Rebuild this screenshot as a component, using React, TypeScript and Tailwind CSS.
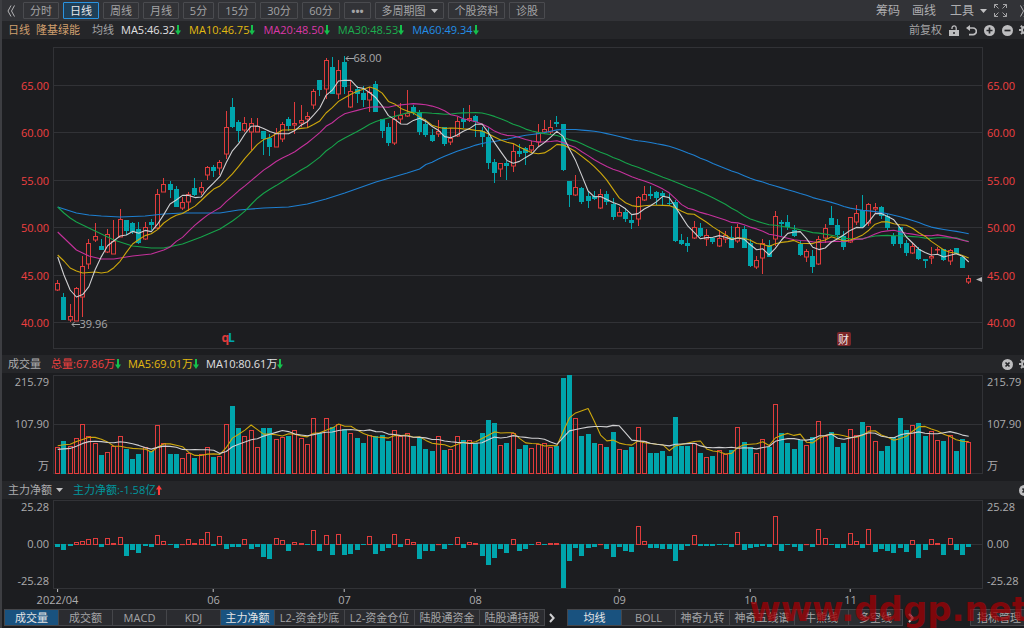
import type { ReactNode } from 'react';
import clsx from 'clsx';

// [high, body top, body bottom, low, up]
type Candle = [number, number, number, number, number];
type Point = [number, number];

const PLOT_W = 930;
const STEP = 6.24;
const RED = '#e03c3c';
const TEAL = '#00a5ac';
const GRID = '#313236';

const candles: Candle[] = [
  [240, 243, 250, 251, 1], [253, 257, 280, 280, 0], [264, 276, 280, 282, 1], [247, 248, 281, 281, 1],
  [216, 226, 257, 277, 1], [199, 203, 224, 229, 1], [183, 196, 200, 202, 1], [199, 206, 210, 210, 0],
  [189, 194, 212, 213, 1], [180, 201, 214, 214, 1], [169, 179, 197, 197, 1], [180, 180, 191, 195, 0],
  [182, 183, 192, 194, 0], [182, 189, 203, 204, 0], [182, 187, 199, 200, 1], [179, 182, 185, 190, 0],
  [149, 154, 188, 189, 1], [138, 144, 152, 152, 1], [141, 144, 150, 158, 0], [146, 149, 167, 167, 0],
  [157, 162, 168, 170, 1], [152, 154, 162, 171, 1], [138, 148, 155, 156, 0], [142, 147, 152, 155, 1],
  [126, 127, 135, 140, 1], [125, 127, 131, 137, 0], [120, 122, 128, 135, 1], [71, 87, 114, 119, 1],
  [58, 67, 87, 88, 0], [80, 82, 91, 102, 0], [77, 83, 90, 92, 1], [78, 83, 92, 110, 1],
  [78, 86, 92, 92, 1], [91, 91, 99, 115, 0], [94, 98, 107, 116, 0], [88, 93, 107, 107, 1],
  [82, 84, 99, 102, 1], [77, 79, 86, 91, 0], [62, 83, 85, 94, 1], [65, 80, 83, 87, 1],
  [72, 76, 79, 88, 1], [49, 51, 65, 69, 1], [40, 40, 50, 56, 0], [18, 20, 49, 59, 1],
  [17, 27, 54, 54, 0], [20, 30, 54, 59, 1], [16, 22, 47, 54, 0], [41, 51, 67, 68, 1],
  [46, 49, 54, 63, 0], [46, 53, 60, 67, 0], [47, 52, 60, 72, 1], [41, 44, 72, 72, 0],
  [79, 79, 91, 98, 0], [83, 87, 103, 106, 0], [71, 79, 103, 105, 1], [63, 75, 79, 83, 1],
  [50, 73, 76, 77, 1], [65, 67, 72, 75, 0], [70, 72, 92, 95, 0], [79, 84, 95, 97, 0],
  [89, 95, 101, 102, 0], [80, 91, 94, 97, 1], [87, 87, 104, 106, 0], [88, 98, 102, 105, 1],
  [77, 81, 96, 97, 1], [68, 79, 82, 88, 0], [65, 78, 80, 82, 1], [75, 76, 82, 97, 0],
  [87, 91, 97, 107, 0], [87, 97, 123, 129, 0], [119, 122, 133, 143, 0], [123, 123, 129, 137, 1],
  [121, 123, 126, 140, 0], [104, 111, 126, 132, 1], [104, 111, 114, 117, 0], [107, 108, 113, 125, 0],
  [101, 105, 110, 113, 1], [84, 92, 102, 106, 1], [80, 89, 92, 94, 1], [80, 87, 92, 94, 1],
  [76, 82, 84, 87, 0], [84, 84, 130, 131, 0], [141, 141, 155, 167, 0], [135, 147, 155, 156, 1],
  [147, 148, 162, 164, 0], [152, 156, 161, 168, 0], [151, 156, 159, 160, 0], [149, 154, 168, 169, 1],
  [151, 154, 162, 165, 0], [158, 164, 177, 180, 0], [167, 172, 176, 176, 1], [168, 172, 179, 182, 0],
  [175, 180, 183, 189, 0], [156, 157, 179, 186, 1], [146, 154, 160, 161, 1], [146, 154, 156, 159, 0],
  [151, 152, 158, 165, 0], [151, 153, 156, 165, 0], [153, 163, 164, 165, 0], [160, 162, 201, 202, 0],
  [194, 200, 204, 205, 0], [197, 203, 206, 212, 0], [181, 187, 198, 199, 1], [183, 188, 196, 197, 0],
  [189, 195, 199, 206, 1], [197, 198, 202, 204, 0], [190, 198, 206, 207, 1], [191, 195, 199, 203, 1],
  [186, 197, 208, 208, 0], [184, 187, 201, 203, 1], [186, 189, 208, 208, 0], [199, 203, 226, 227, 0],
  [216, 220, 227, 229, 1], [199, 203, 218, 234, 1], [200, 205, 217, 217, 0], [171, 176, 199, 206, 1],
  [180, 182, 184, 196, 0], [175, 182, 187, 190, 0], [185, 190, 196, 197, 0], [201, 204, 215, 216, 0],
  [209, 211, 217, 222, 1], [210, 216, 227, 233, 0], [196, 199, 224, 225, 1], [184, 188, 198, 203, 1],
  [166, 178, 185, 185, 0], [179, 185, 195, 199, 0], [191, 196, 207, 210, 0], [177, 177, 202, 203, 1],
  [165, 173, 182, 185, 1], [155, 170, 187, 188, 0], [163, 164, 183, 186, 1], [163, 167, 169, 173, 1],
  [166, 167, 176, 179, 0], [174, 176, 188, 190, 0], [193, 196, 204, 206, 0], [187, 187, 204, 208, 0],
  [200, 203, 213, 216, 0], [203, 206, 213, 214, 1], [207, 209, 219, 220, 0], [219, 219, 221, 228, 0],
  [207, 216, 218, 224, 1], [207, 209, 210, 214, 1], [209, 209, 220, 221, 0], [209, 210, 221, 225, 1],
  [208, 208, 214, 214, 0], [215, 217, 228, 228, 0], [235, 238, 242, 244, 1],
];

// in units of 10,000 lots
const volumes = [
  58, 71, 60, 77, 108, 83, 68, 40, 48, 61, 82, 54, 31, 43, 58, 50, 106, 68, 43, 43, 34, 44, 35, 42, 58,
  36, 39, 108, 148, 99, 82, 95, 58, 99, 99, 75, 81, 83, 95, 79, 64, 121, 89, 121, 103, 108, 97, 90, 78,
  66, 84, 83, 85, 71, 95, 82, 90, 60, 77, 54, 50, 82, 52, 53, 82, 74, 74, 66, 89, 117, 111, 62, 68, 90,
  54, 62, 55, 65, 66, 58, 61, 209, 216, 121, 82, 86, 68, 64, 58, 91, 53, 52, 58, 103, 71, 45, 45, 50, 39,
  124, 61, 61, 66, 45, 36, 39, 52, 42, 52, 101, 69, 58, 46, 75, 59, 152, 88, 66, 53, 74, 63, 80, 116, 83,
  91, 58, 66, 97, 85, 113, 104, 71, 50, 61, 80, 121, 96, 106, 111, 83, 93, 73, 71, 85, 49, 76, 70,
];

const flows = [
  -1.4, -3.3, -0.8, 1.7, 2.3, 3.3, 3.9, -1.7, 3.7, 0.7, 4.3, -6.6, -3.3, -4.8, -0.8, -1.4, 5.8, 1.9, -0.2,
  -2.3, 0.2, 3.3, 0.6, 3.3, 7, -0.8, 4.8, -2.7, -1.3, -1.7, 3.4, -2.7, -1.2, -7, -8.5, 3.7, 2.9, -3.9, 1.2,
  0.7, -0.2, 8.5, -3.9, 5.8, -6, 6.3, -6, -5.4, -3.3, -0.2, 5.2, -5.4, -3.9, -2.1, 6.3, -1.7, 3.3, 1.2,
  -8.5, -3.9, -3.9, 0.2, -2.7, -0.2, 4.2, -2.1, 1.7, 0.7, -6.6, -12.2, -8, -2.7, -4.8, 3.3, -3.9, -2.7,
  -0.2, 1.7, -0.2, 0.6, 0.6, -25.3, -9.5, -1.8, -6.8, -2.2, -1.2, 0.5, -2.8, -7.5, -1.2, -3.8, -4.3, 10.5,
  2.3, -2.3, -1.8, -2.7, -2.7, -9.5, -3.3, -0.8, 5.8, -0.8, -0.8, -0.8, -0.2, -0.2, -1.7, 7, -3.3, -1.9,
  -1.3, -1, -1.3, 16.3, -3.9, -0.2, -1.3, -3.9, 0.2, -1.3, 8.9, 3.7, -0.2, -1.9, -1.9, 6.4, 2.3, -2.3, 8.9,
  -4.3, -2.7, -3.9, -4.8, -2.1, -4.3, 2.7, -8, -3.3, 3.3, 0.7, -6, 3.7, -3.3, -6, -1.7,
];

const months = [
  { i: 0, label: '2022/04' },
  { i: 25, label: '06' },
  { i: 46, label: '07' },
  { i: 67, label: '08' },
  { i: 90, label: '09' },
  { i: 111, label: '10' },
  { i: 127, label: '11' },
];

const closes = candles.map(([, top, bottom, , up]) => (up ? top : bottom));

const barX = (i: number) => Math.floor(4.7 + i * STEP) + 0.5;
const percent = (i: number) => `${(barX(i) / PLOT_W) * 100}%`;

// moving average, with known points for the days before the window is full
function average(values: number[], n: number, lead: Point[]): Point[] {
  const rest = values.slice(n - 1).map((_, k): Point => {
    const span = values.slice(k, k + n);
    return [k + n - 1, span.reduce((a, b) => a + b, 0) / n];
  });
  return [...lead, ...rest];
}

const priceLines = [
  {
    color: '#1e7fd0',
    points: average(closes, 60, [
      [0, 167], [1, 169], [3, 173], [5, 175], [7, 176], [10, 177], [14, 176], [17, 174], [20, 173], [26, 173],
      [29, 170], [33, 168], [37, 167], [40, 164], [43, 159], [46, 153], [51, 142], [56, 133], [58, 129],
    ]),
  },
  {
    color: '#16a34a',
    points: average(closes, 30, [
      [0, 167], [1, 173], [2, 178], [3, 182], [5, 188], [7, 194], [9, 200], [12, 206], [15, 208], [17, 208],
      [20, 204], [23, 197], [26, 189], [28, 181],
    ]),
  },
  {
    color: '#c4319b',
    points: average(closes, 20, [
      [0, 192], [1, 198], [2, 204], [3, 210], [4, 213], [5, 216], [7, 219], [9, 219], [12, 216], [15, 214],
      [17, 210], [18, 207],
    ]),
  },
  {
    color: '#cda70c',
    points: average(closes, 10, [[0, 215], [1, 221], [2, 228], [3, 231], [4, 233], [6, 232], [7, 233], [8, 232]]),
  },
  { color: '#cfcfd1', points: average(closes, 5, [[0, 217], [1, 235], [2, 250], [3, 257]]) },
];

const volumeLines = [
  { color: '#cda70c', points: average(volumes, 5, [[0, 61], [1, 63], [2, 64], [3, 70]]) },
  {
    color: '#cfcfd1',
    points: average(volumes, 10, [[0, 53], [1, 54], [2, 55], [3, 60], [4, 66], [5, 70], [6, 71], [7, 70], [8, 68]]),
  },
];

const volumeY = (v: number) => 100.5 - v * 0.4555;
const flowY = (v: number) => 45.5 - v * 1.72;

function Line({ points, color, y = (v) => v }: { points: Point[]; color: string; y?: (v: number) => number }) {
  return (
    <polyline
      points={points.map(([i, v]) => `${4.7 + i * STEP},${y(v).toFixed(1)}`).join(' ')}
      fill="none"
      stroke={color}
      strokeWidth="1.1"
      strokeLinejoin="round"
    />
  );
}

function Grid({ top, bottom, rows }: { top: number; bottom: number; rows: number[] }) {
  return (
    <g fill="none" stroke={GRID}>
      <rect x="0.5" y={top} width={PLOT_W - 1} height={bottom - top} />
      {rows.map((y) => (
        <line key={y} x1="0" x2={PLOT_W} y1={y} y2={y} />
      ))}
    </g>
  );
}

function PriceChart() {
  return (
    <div className="relative min-w-0 flex-1">
      <svg viewBox="0 0 930 315" preserveAspectRatio="none" className="block h-[315px] w-full">
        <Grid top={7.5} bottom={308.5} rows={[45.5, 92.5, 140.5, 187.5, 235.5, 282.5]} />
        {candles.map(([high, top, bottom, low, up], i) => {
          const x = barX(i);
          if (up) {
            return (
              <g key={i} stroke={RED} fill="none">
                <path d={`M${x} ${high}V${top}M${x} ${bottom}V${low}`} />
                <rect x={x - 2} y={top + 0.5} width="4" height={Math.max(bottom - top - 0.5, 0.5)} />
              </g>
            );
          }
          return (
            <g key={i}>
              <path d={`M${x} ${high}V${low}`} stroke={TEAL} />
              <rect x={x - 2.5} y={top} width="5" height={Math.max(bottom - top, 1)} fill={TEAL} />
            </g>
          );
        })}
        {priceLines.map((line) => (
          <Line key={line.color} {...line} />
        ))}
        <path d="M923 239.5l6-2.5v5z" fill="#b4b4b6" />
      </svg>
      <span
        className="absolute top-[10px] flex items-center text-[11px] leading-4 text-[#a8a8aa]"
        style={{ left: percent(46) }}
      >
        <ShortArrow />
        68.00
      </span>
      <span
        className="absolute top-[276px] flex items-center text-[11px] leading-4 text-[#a8a8aa]"
        style={{ left: percent(2) }}
      >
        <ShortArrow />
        39.96
      </span>
      <span
        className="absolute top-[290px] -ml-1 flex -translate-x-px text-[12px] leading-4 font-bold text-[#e03a3a]"
        style={{ left: percent(27) }}
      >
        q<span className="-ml-px text-[#00a5ac]">L</span>
      </span>
      <span
        className="absolute top-[292px] -ml-[7px] flex h-[14px] w-[14px] items-center justify-center rounded-[2px] bg-[#7b2628] text-[11px] leading-none text-[#f0e4e4]"
        style={{ left: percent(126) }}
      >
        财
      </span>
    </div>
  );
}

function VolumeChart() {
  return (
    <svg viewBox="0 0 930 108" preserveAspectRatio="none" className="block h-[108px] min-w-0 flex-1">
      <Grid top={2.5} bottom={100.5} rows={[51.5]} />
      {volumes.map((v, i) => {
        const y = Math.round(volumeY(v));
        return candles[i][4] ? (
          <rect key={i} x={barX(i) - 2} y={y + 0.5} width="4" height={100 - y} fill="none" stroke={RED} />
        ) : (
          <rect key={i} x={barX(i) - 2.5} y={y} width="5" height={101 - y} fill={TEAL} />
        );
      })}
      {volumeLines.map((line) => (
        <Line key={line.color} {...line} y={volumeY} />
      ))}
    </svg>
  );
}

function FlowChart() {
  return (
    <svg viewBox="0 0 930 90" preserveAspectRatio="none" className="block h-[90px] min-w-0 flex-1">
      <Grid top={1.5} bottom={89.5} rows={[45.5]} />
      {flows.map((v, i) => {
        const y = Math.round(flowY(v));
        if (v > 0) {
          return (
            <rect key={i} x={barX(i) - 2} y={Math.min(y, 45) + 0.5} width="4" height={Math.max(45 - y, 0.1)} fill="none" stroke={RED} />
          );
        }
        return <rect key={i} x={barX(i) - 2.5} y="45" width="5" height={Math.max(y - 45, 1)} fill={TEAL} />;
      })}
    </svg>
  );
}

function ShortArrow() {
  return (
    <svg viewBox="0 0 9 7" className="h-[7px] w-[9px] shrink-0" fill="none" stroke="#a8a8aa">
      <path d="M1 3.5H9M3.5 1L1 3.5L3.5 6" />
    </svg>
  );
}

function Trend({ up = false }: { up?: boolean }) {
  return (
    <svg viewBox="0 0 6 10" className={clsx('h-[10px] w-[6px] shrink-0', up && 'rotate-180')}>
      <path d="M2 0h2v5.5h2L3 10 0 5.5h2z" fill={up ? '#ff3b3b' : '#15c04c'} />
    </svg>
  );
}

function Caret() {
  return (
    <svg viewBox="0 0 7 4" className="h-[4px] w-[7px] shrink-0" fill="#c0c0c2">
      <path d="M0 0h7L3.5 4z" />
    </svg>
  );
}

function Chevron() {
  return (
    <svg viewBox="0 0 6 10" className="h-[10px] w-[6px]" fill="none" stroke="#d0d0d2" strokeWidth="2">
      <path d="M1 1l3.6 4L1 9" />
    </svg>
  );
}

function Gear() {
  return (
    <svg viewBox="0 0 12 12" className="h-3 w-3 shrink-0" fill="none" stroke="#b8b8ba">
      <circle cx="6" cy="6" r="3" strokeWidth="2" />
      <path d="M6 0v12M0 6h12M1.8 1.8l1.6 1.6M8.6 8.6l1.6 1.6M10.2 1.8L8.6 3.4M3.4 8.6l-1.6 1.6" strokeWidth="2" strokeDasharray="2 8" />
    </svg>
  );
}

function DiscIcon({ d }: { d: string }) {
  return (
    <svg viewBox="0 0 11 11" className="h-[11px] w-[11px] shrink-0" fill="none">
      <circle cx="5.5" cy="5.5" r="5.5" fill="#bdbdbf" />
      <path d={d} stroke="#252629" strokeWidth="1.7" />
    </svg>
  );
}

// shows only the left part of whatever is inside
function Cut({ className, children }: { className: string; children: ReactNode }) {
  return <span className={clsx('flex shrink-0 overflow-hidden', className)}>{children}</span>;
}

function IconButton({ label, className, children }: { label: string; className?: string; children: ReactNode }) {
  return (
    <button type="button" aria-label={label} className={clsx('flex shrink-0 items-center', className)}>
      {children}
    </button>
  );
}

const periods = [
  { label: '分时', width: 'w-[36px]' },
  { label: '日线', width: 'w-[36px]', active: true },
  { label: '周线', width: 'w-[36px]' },
  { label: '月线', width: 'w-[36px]' },
  { label: '5分', width: 'w-[31px]' },
  { label: '15分', width: 'w-[38px]' },
  { label: '30分', width: 'w-[38px]' },
  { label: '60分', width: 'w-[38px]' },
  { label: '•••', width: 'w-[27px]' },
  { label: '多周期图', width: 'w-[69px]', menu: true },
  { label: '个股资料', width: 'w-[57px]' },
  { label: '诊股', width: 'w-[36px]' },
];

function Toolbar() {
  return (
    <header className="flex h-[21px] items-center justify-between bg-[#323337]">
      <div className="flex items-center gap-1 pl-[5px]">
        <IconButton label="收起" className="w-[12px]">
          <svg viewBox="0 0 8 12" className="h-3 w-2" fill="none" stroke="#b4b4b6">
            <path d="M4 .5L1 6l3 5.5M7.5 .5l-3 5.5 3 5.5" />
          </svg>
        </IconButton>
        {periods.map((p) => (
          <button
            key={p.label}
            type="button"
            className={clsx(
              'flex h-[17px] shrink-0 items-center justify-center gap-[5px] rounded-[1px] border leading-none whitespace-nowrap',
              p.width,
              p.active ? 'border-[#2a93e0] bg-[#1f3f57] text-[#e8e8ea]' : 'border-[#4a4b4f] text-[#a4a4a6]',
              p.label === '•••' && 'font-bold',
            )}
          >
            {p.label}
            {p.menu && <Caret />}
          </button>
        ))}
      </div>
      <div className="flex items-center text-[12px] leading-none text-[#aeaeb0]">
        <button type="button" className="mr-3">筹码</button>
        <button type="button" className="mr-[14px]">画线</button>
        <button type="button" className="mr-[7px] flex items-center gap-[6px]">
          工具
          <Caret />
        </button>
        <IconButton label="全屏" className="mr-[13px]">
          <svg viewBox="0 0 13 13" className="h-[13px] w-[13px]" fill="none" stroke="#a4a4a6">
            <path d="M.5 4V.5H4M.5 .5L4.5 4.5M9 .5h3.5V4M12.5 .5L8.5 4.5M.5 9v3.5H4M.5 12.5L4.5 8.5M9 12.5h3.5V9M12.5 12.5L8.5 8.5" />
          </svg>
        </IconButton>
        <Cut className="w-[4px]">
          <svg viewBox="0 0 8 12" className="h-3 w-2 shrink-0" fill="none" stroke="#b4b4b6">
            <path d="M.5 .5l3 5.5-3 5.5M4 .5l3 5.5-3 5.5" />
          </svg>
        </Cut>
      </div>
    </header>
  );
}

const averages = [
  { text: 'MA5:46.32', color: 'text-[#e0e0e2]' },
  { text: 'MA10:46.75', color: 'text-[#e2ba10]' },
  { text: 'MA20:48.50', color: 'text-[#dc38a8]' },
  { text: 'MA30:48.53', color: 'text-[#1cae4f]' },
  { text: 'MA60:49.34', color: 'text-[#228ee8]' },
];

function PriceLegend() {
  return (
    <div className="flex h-[19px] items-center justify-between border-b border-[#1c1d20] bg-[#252629] whitespace-nowrap">
      <div className="flex items-center pl-[6px]">
        <span className="mr-[6px] text-[#cf9f6e]">日线</span>
        <span className="mr-3 text-[#cf9f6e]">隆基绿能</span>
        <span className="mr-[7px] text-[#a4a4a6]">均线</span>
        <div className="flex gap-2">
          {averages.map((a) => (
            <span key={a.text} className={clsx('flex items-center', a.color)}>
              {a.text}
              <Trend />
            </span>
          ))}
        </div>
      </div>
      <div className="flex items-center text-[#a4a4a6]">
        <button type="button" className="mr-[7px]">前复权</button>
        <IconButton label="锁定" className="mr-[7px]">
          <svg viewBox="0 0 10 11" className="h-[11px] w-[10px]" fill="none" stroke="#bdbdbf">
            <path d="M3 4V3a2 2 0 0 1 4.2 0V5" strokeWidth="1.3" />
            <path d="M0 5h10v6H0z" fill="#bdbdbf" stroke="none" />
            <path d="M5 7v2" stroke="#252629" strokeWidth="1.5" />
          </svg>
        </IconButton>
        <IconButton label="撤销" className="mr-[7px]">
          <svg viewBox="0 0 11 11" className="h-[11px] w-[11px]" fill="none" stroke="#bdbdbf" strokeWidth="1.7">
            <path d="M1 3h6a3.3 3.3 0 0 1 0 6.7H3" />
            <path d="M4 0v6L0 3z" fill="#bdbdbf" stroke="none" />
          </svg>
        </IconButton>
        <IconButton label="放大" className="mr-[7px]">
          <DiscIcon d="M5.5 2.5v6M2.5 5.5h6" />
        </IconButton>
        <IconButton label="缩小" className="mr-[6px]">
          <DiscIcon d="M2.5 5.5h6" />
        </IconButton>
        <Cut className="w-[5px]">
          <Gear />
        </Cut>
      </div>
    </div>
  );
}

function Axis({ labels, side, className }: { labels: string[]; side: 'left' | 'right'; className: string }) {
  return (
    <div
      className={clsx(
        'flex shrink-0 flex-col justify-between leading-4',
        side === 'left' ? 'w-[51px] items-end pr-1' : 'w-[41px] items-start pl-1',
        className,
      )}
    >
      {labels.map((label) => (
        <span key={label}>{label}</span>
      ))}
    </div>
  );
}

function Panel({ labels, axis, children }: { labels: string[]; axis: string; children: ReactNode }) {
  return (
    <div className="flex">
      <Axis labels={labels} side="left" className={axis} />
      {children}
      <Axis labels={labels} side="right" className={axis} />
    </div>
  );
}

const indicatorTabs = [
  { label: '成交量', width: 'w-[54px]', active: true },
  { label: '成交额', width: 'w-[54px]' },
  { label: 'MACD', width: 'w-[54px]' },
  { label: 'KDJ', width: 'w-[54px]' },
  { label: '主力净额', width: 'w-[54px]', active: true },
  { label: 'L2-资金抄底', width: 'w-[70px]' },
  { label: 'L2-资金仓位', width: 'w-[70px]' },
  { label: '陆股通资金', width: 'w-[65px]' },
  { label: '陆股通持股', width: 'w-[65px]' },
];

const overlayTabs = [
  { label: '均线', width: 'w-[54px]', active: true },
  { label: 'BOLL', width: 'w-[54px]' },
  { label: '神奇九转', width: 'w-[54px]' },
  { label: '神奇五线谱', width: 'w-[65px]' },
  { label: '牛熊线', width: 'w-[54px]' },
  { label: '多空线', width: 'w-[54px]' },
];

function Tabs({ tabs }: { tabs: { label: string; width: string; active?: boolean }[] }) {
  return (
    <div className="flex shrink-0 border-l border-[#45464a]">
      {tabs.map((tab) => (
        <button
          key={tab.label}
          type="button"
          className={clsx(
            'h-[17px] border-y border-r border-[#45464a] text-center leading-none whitespace-nowrap',
            tab.width,
            tab.active ? 'bg-[#19527f] text-[#e4e4e6]' : 'bg-[#2b2c30] text-[#a4a4a6]',
          )}
        >
          {tab.label}
        </button>
      ))}
    </div>
  );
}

export default function App() {
  return (
    <div className="relative min-h-screen overflow-hidden border-l-2 border-[#3d3e42] bg-[#1c1d20] font-['Open_Sans','Noto_Sans_CJK_SC',sans-serif] text-[11px] text-[#acacae]">
      <Toolbar />
      <PriceLegend />
      <div className="text-[#f04040]">
        <Panel labels={['65.00', '60.00', '55.00', '50.00', '45.00', '40.00']} axis="pt-[38px] pb-[24px]">
          <PriceChart />
        </Panel>
      </div>

      <div className="flex h-[18px] items-center justify-between bg-[#252629] whitespace-nowrap">
        <div className="flex items-center pl-[6px]">
          <span className="mr-[10px]">成交量</span>
          <span className="mr-[7px] flex items-center text-[#f04040]">
            总量:67.86万
            <Trend />
          </span>
          <span className="mr-[7px] flex items-center text-[#e2ba10]">
            MA5:69.01万
            <Trend />
          </span>
          <span className="flex items-center text-[#e0e0e2]">
            MA10:80.61万
            <Trend />
          </span>
        </div>
        <div className="flex items-center">
          <IconButton label="关闭" className="mr-[6px]">
            <DiscIcon d="M3.5 3.5l4 4M7.5 3.5l-4 4" />
          </IconButton>
          <Cut className="w-[5px]">
            <Gear />
          </Cut>
        </div>
      </div>
      <Panel labels={['215.79', '107.90', '万']} axis="pt-px pb-[7px]">
        <VolumeChart />
      </Panel>

      <div className="flex h-[18px] items-center justify-between bg-[#252629] whitespace-nowrap">
        <div className="flex items-center pl-[6px]">
          <button type="button" className="mr-[10px] flex items-center gap-[4px]">
            主力净额
            <Caret />
          </button>
          <span className="flex items-center text-[#00979e]">
            主力净额:-1.58亿
            <Trend up />
          </span>
        </div>
        <Cut className="w-[5px]">
          <DiscIcon d="M3.5 3.5l4 4M7.5 3.5l-4 4" />
        </Cut>
      </div>
      <Panel labels={['25.28', '0.00', '-25.28']} axis="">
        <FlowChart />
      </Panel>

      <div className="relative mr-[41px] ml-[51px] h-[20px]">
        {months.map((m) => (
          <span
            key={m.label}
            className="absolute top-0 flex -translate-x-1/2 flex-col items-center leading-4"
            style={{ left: percent(m.i) }}
          >
            <span className="h-[3px] w-px bg-[#c0c0c2]" />
            {m.label}
          </span>
        ))}
      </div>

      <nav className="flex items-center overflow-hidden pl-[2px]">
        <Tabs tabs={indicatorTabs} />
        <IconButton label="更多指标" className="w-[22px] pl-1">
          <Chevron />
        </IconButton>
        <Tabs tabs={overlayTabs} />
        <IconButton label="更多均线" className="w-[16px] justify-center">
          <Chevron />
        </IconButton>
        <button
          type="button"
          className="-mr-1 ml-auto h-[17px] w-[58px] shrink-0 border border-[#45464a] bg-[#2b2c30] leading-none whitespace-nowrap text-[#a4a4a6]"
        >
          指标管理
        </button>
      </nav>

      <span className="pointer-events-none absolute -right-1 bottom-0 font-['DejaVu_Sans',sans-serif] text-[34px] leading-[38px] font-bold text-[#a00004]/75">
        www.ddgp.net
      </span>
    </div>
  );
}
